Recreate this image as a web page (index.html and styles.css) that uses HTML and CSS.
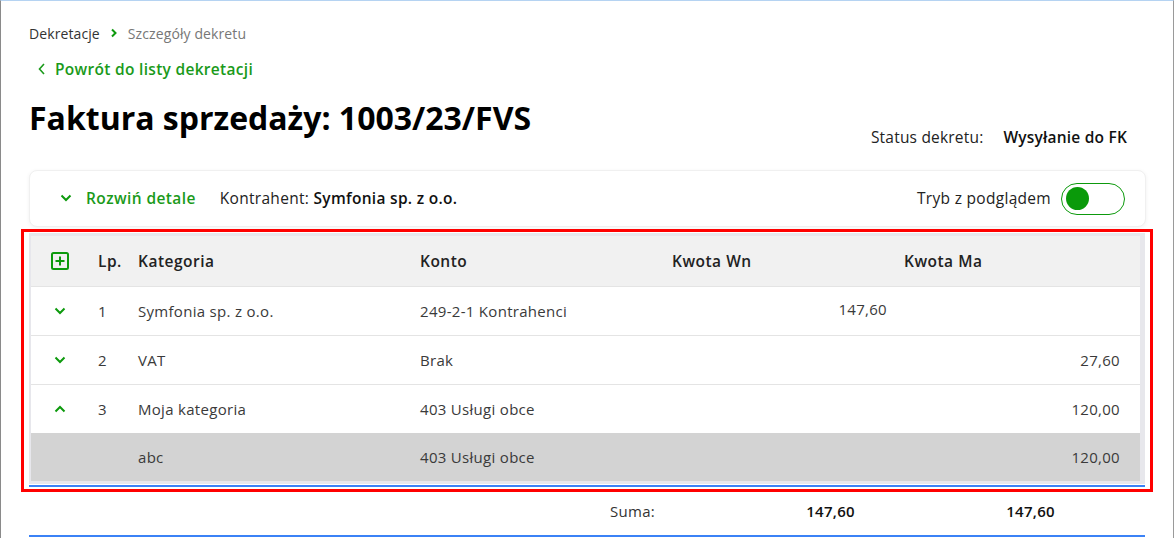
FILE: index.html
```html
<!DOCTYPE html>
<html lang="pl">
<head>
<meta charset="utf-8">
<title>Szczegóły dekretu</title>
<link rel="stylesheet" href="styles.css">
</head>
<body>
<div class="page">
  <nav class="crumbs">
    <span class="crumb">Dekretacje</span>
    <svg class="crumb-sep" viewBox="0 0 10 10" width="10" height="10"><path d="M3 1.5 L6.5 5 L3 8.5" fill="none" stroke="#0d9a0d" stroke-width="2"/></svg>
    <span class="crumb current">Szczegóły dekretu</span>
  </nav>
  <a class="back" href="#">
    <svg viewBox="0 0 10 14" width="10" height="14"><path d="M7 2 L2.5 7 L7 12" fill="none" stroke="#1a9a1a" stroke-width="1.6"/></svg>
    <span>Powrót do listy dekretacji</span>
  </a>
  <h1 class="title">Faktura sprzedaży: 1003/23/FVS</h1>
  <div class="status">
    <span class="status-label">Status dekretu:</span>
    <span class="status-value">Wysyłanie do FK</span>
  </div>
  <div class="card">
    <button class="expand">
      <svg viewBox="0 0 12 8" width="12" height="8"><path d="M1.5 1.5 L6 6 L10.5 1.5" fill="none" stroke="#0d9a0d" stroke-width="2"/></svg>
      <span>Rozwiń detale</span>
    </button>
    <span class="contractor">Kontrahent: <b>Symfonia sp. z o.o.</b></span>
    <span class="spacer"></span>
    <span class="mode">Tryb z podglądem</span>
    <span class="toggle"><span class="knob"></span></span>
  </div>
  <div class="frame">
    <div class="table">
      <div class="row head">
        <span class="c-ic"><svg viewBox="0 0 18 18" width="18" height="18"><rect x="1" y="1" width="16" height="16" rx="1.5" fill="none" stroke="#0d9a0d" stroke-width="2"/><path d="M9 4.5 V13.5 M4.5 9 H13.5" stroke="#0d9a0d" stroke-width="2"/></svg></span>
        <span class="c-lp">Lp.</span>
        <span class="c-cat">Kategoria</span>
        <span class="c-acc">Konto</span>
        <span class="c-wn">Kwota Wn</span>
        <span class="c-ma">Kwota Ma</span>
      </div>
      <div class="row">
        <span class="c-ic"><svg viewBox="0 0 12 8" width="12" height="8"><path d="M1.5 1.5 L6 6 L10.5 1.5" fill="none" stroke="#0d9a0d" stroke-width="2"/></svg></span>
        <span class="c-lp">1</span>
        <span class="c-cat">Symfonia sp. z o.o.</span>
        <span class="c-acc">249-2-1 Kontrahenci</span>
        <span class="c-wn num up">147,60</span>
        <span class="c-ma num"></span>
      </div>
      <div class="row">
        <span class="c-ic"><svg viewBox="0 0 12 8" width="12" height="8"><path d="M1.5 1.5 L6 6 L10.5 1.5" fill="none" stroke="#0d9a0d" stroke-width="2"/></svg></span>
        <span class="c-lp">2</span>
        <span class="c-cat">VAT</span>
        <span class="c-acc">Brak</span>
        <span class="c-wn num"></span>
        <span class="c-ma num">27,60</span>
      </div>
      <div class="row">
        <span class="c-ic"><svg viewBox="0 0 12 8" width="12" height="8"><path d="M1.5 6.5 L6 2 L10.5 6.5" fill="none" stroke="#0d9a0d" stroke-width="2"/></svg></span>
        <span class="c-lp">3</span>
        <span class="c-cat">Moja kategoria</span>
        <span class="c-acc">403 Usługi obce</span>
        <span class="c-wn num"></span>
        <span class="c-ma num">120,00</span>
      </div>
      <div class="row sub">
        <span class="c-ic"></span>
        <span class="c-lp"></span>
        <span class="c-cat">abc</span>
        <span class="c-acc">403 Usługi obce</span>
        <span class="c-wn num"></span>
        <span class="c-ma num">120,00</span>
      </div>
    </div>
    <div class="blue"></div>
  </div>
  <div class="sum">
    <span></span>
    <span class="sum-label">Suma:</span>
    <span class="sum-val">147,60</span>
    <span class="sum-val">147,60</span>
  </div>
</div>
</body>
</html>
```

FILE: styles.css
```css
html, body {
  margin: 0;
  padding: 0;
  background: #fff;
}
body {
  font-family: "Open Sans", "Lato", sans-serif;
  color: #222;
  width: 1176px;
  height: 538px;
  overflow: hidden;
}
.page {
  box-sizing: border-box;
  height: 538px;
  border-top: 1px solid #b5d3f2;
  border-left: 1px solid #8a8a8a;
  border-right: 1px solid #9a9a9a;
  padding: 0 0 0 28px;
  width: 1174px;
}
.crumbs {
  display: flex;
  align-items: center;
  gap: 9px;
  height: 20px;
  margin-top: 22px;
  font-size: 14px;
  letter-spacing: 0.1px;
}
.crumb { color: #333; }
.crumb.current { color: #777; }
.back {
  display: flex;
  align-items: center;
  gap: 8px;
  margin-top: 16px;
  height: 20px;
  color: #1a9a1a;
  font-size: 15.5px;
  font-weight: 600;
  letter-spacing: 0.3px;
  text-decoration: none;
  padding-left: 8px;
}
.title {
  margin: 19px 0 0 0;
  height: 40px;
  line-height: 40px;
  font-size: 32px;
  font-weight: 700;
  color: #000;
}
.status {
  display: flex;
  justify-content: flex-end;
  align-items: center;
  gap: 20px;
  height: 20px;
  margin-top: -11px;
  padding-right: 46px;
  font-size: 15.5px;
  letter-spacing: 0.2px;
}
.status-label { color: #222; }
.status-value { font-weight: 600; color: #111; }
.card {
  display: flex;
  align-items: center;
  box-sizing: border-box;
  width: 1117px;
  height: 57px;
  margin-top: 23px;
  padding: 0 20px 2px 30px;
  background: #fff;
  border: 1px solid #f0f0f0;
  border-radius: 8px;
  box-shadow: 0 1px 4px rgba(0,0,0,0.06);
  font-size: 15.5px;
  letter-spacing: 0.3px;
}
.expand {
  display: flex;
  align-items: center;
  gap: 14px;
  border: 0;
  background: none;
  padding: 0;
  font: inherit;
  letter-spacing: 0.4px;
  font-weight: 600;
  color: #1a9a1a;
}
.contractor {
  margin-left: 24px;
  color: #222;
}
.contractor b { color: #111; font-weight: 600; }
.spacer { flex: 1; }
.mode { color: #222; margin-right: 10px; }
.toggle {
  box-sizing: border-box;
  width: 64px;
  height: 32px;
  margin-top: 2px;
  border: 1.5px solid #0d9a0d;
  border-radius: 16px;
  display: flex;
  align-items: center;
  padding-left: 4px;
}
.knob {
  width: 23px;
  height: 23px;
  border-radius: 50%;
  background: #0a9a0a;
}
.frame {
  box-sizing: border-box;
  width: 1132px;
  margin: 2px 0 0 -8px;
  border: 3px solid #ff0000;
  padding: 1px 5px 2px 5px;
  position: relative;
  z-index: 1;
}
.table {
  border: 3px solid #e7e7ec;
  border-left-width: 2px;
  border-right-width: 5px;
  border-bottom-width: 3px;
}
.row {
  display: grid;
  grid-template-columns: 55px 40px 282px 252px 232px 1fr;
  align-items: center;
  height: 48px;
  border-top: 1px solid #e4e4e4;
  font-size: 15px;
  letter-spacing: 0.3px;
  color: #3a3a3a;
  background: #fff;
}
.row.head {
  height: 50px;
  border-top: 0;
  background: #f1f1f1;
  color: #222;
  font-weight: 600;
  font-size: 15.5px;
  letter-spacing: 0.5px;
}
.row.sub {
  background: #d3d3d3;
  border-top: 0;
}
.c-ic { display: flex; justify-content: center; padding-left: 3px; }
.c-lp, .c-cat, .c-acc, .c-wn, .c-ma { padding-left: 12px; }
.num { text-align: right; }
.c-wn.num { padding-right: 5px; }
.c-ma.num { padding-right: 20px; }
.up { align-self: start; padding-top: 12px; }
.blue {
  height: 2px;
  background: #3b82f6;
  margin-top: 1px;
}
.sum {
  display: grid;
  grid-template-columns: 581px 150px 95px 200px;
  align-items: center;
  box-sizing: border-box;
  width: 1116px;
  height: 50px;
  margin-top: -5px;
  border-bottom: 2px solid #3b82f6;
  font-size: 15px;
  letter-spacing: 0.3px;
}
.sum-label { color: #333; }
.sum-val { text-align: right; font-weight: 600; color: #111; }
```
